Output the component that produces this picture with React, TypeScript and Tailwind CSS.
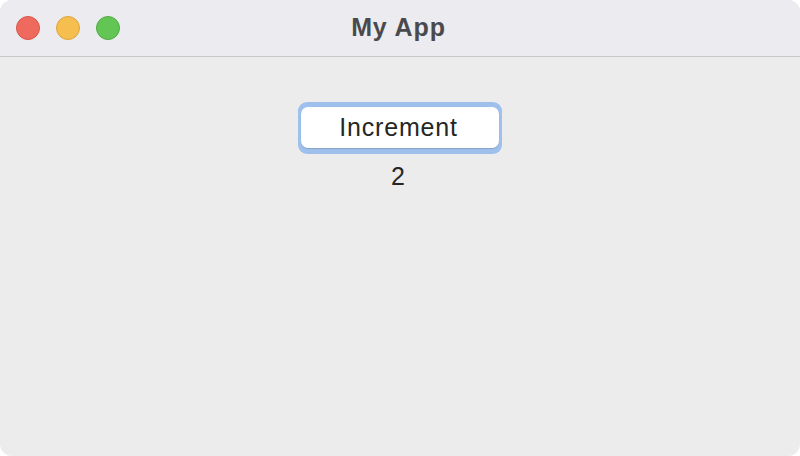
export default function App() {
  return (
    <div className="w-[800px] h-[456px] bg-white" style={{ fontFamily: '"Liberation Sans", Arial, sans-serif' }}>
      <div className="w-full h-full rounded-[12px] overflow-hidden bg-[#ececec] flex flex-col">
        {/* Title bar */}
        <div className="relative h-[57px] shrink-0 bg-[#ecebf0] border-b border-[#c9c9c9] flex items-center justify-center">
          <div className="absolute left-[16px] top-[16px] flex gap-[16px]">
            <span className="w-[24px] h-[24px] rounded-full bg-[#ee6a5f] border border-[#d9544a]" />
            <span className="w-[24px] h-[24px] rounded-full bg-[#f5be4f] border border-[#dea63a]" />
            <span className="w-[24px] h-[24px] rounded-full bg-[#62c554] border border-[#52ac45]" />
          </div>
          <span className="pr-[3px] text-[25px] font-bold text-[#4a4a4d] tracking-[0.9px]">My App</span>
        </div>

        {/* Content */}
        <div className="flex flex-col items-center pt-[45px]">
          <div className="rounded-[9px] bg-[#9fc0ec] p-[3px] pt-[5px] pb-[6px]">
            <button className="w-[198px] h-[41px] rounded-[7px] bg-white text-[25px] text-[#262626] leading-none shadow-[0_1px_1px_rgba(0,0,0,0.15)] tracking-[0.8px] pr-[3px]">
              Increment
            </button>
          </div>
          <div className="mt-[8px] pr-[4px] text-[25px] text-[#262626] leading-[28px]">2</div>
        </div>
      </div>
    </div>
  )
}
